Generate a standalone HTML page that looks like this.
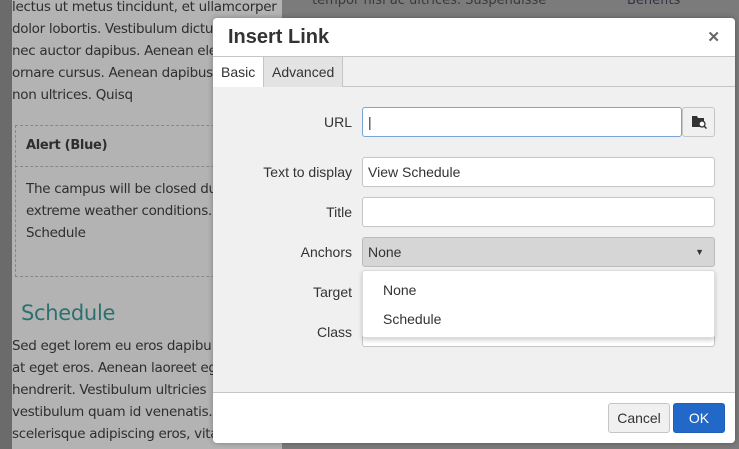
<!DOCTYPE html><html><head><style>
*{box-sizing:border-box;margin:0;padding:0}
body{width:739px;height:449px;overflow:hidden;position:relative;background:#777;font-family:"Liberation Sans",sans-serif}
.l{position:absolute;left:0;top:0;width:12px;height:449px;background:#6b6b6b}
.c{position:absolute;left:12px;top:0;width:270px;height:449px;background:#b3b3b3;color:#2e2e2e;font-family:"DejaVu Sans",sans-serif;font-size:13.5px;letter-spacing:-0.3px}
.p{position:absolute;left:0;white-space:nowrap;line-height:22px}
.r{position:absolute;left:282px;top:0;width:457px;height:449px;background:#7b7b7b;color:#3a3a3a;font-family:"DejaVu Sans",sans-serif;font-size:13px}
.dlg{position:absolute;left:213px;top:18px;width:522px;height:425px;background:#f0f0f0;border-radius:4px;overflow:hidden;box-shadow:0 0 6px rgba(0,0,0,.3)}
.hd{height:39px;background:#fff;border-bottom:1px solid #c5c5c5;position:relative}
.hd b{position:absolute;left:15px;top:8px;font-size:20px;color:#333}
.x{position:absolute;right:15px;top:10px;font-size:15px;color:#666;font-weight:bold}
.tabs{height:30px;border-bottom:1px solid #c5c5c5;position:relative}
.tab{position:absolute;top:0;height:30px;line-height:30px;font-size:14px;color:#333;padding:0 8px}
.lab{position:absolute;right:383px;font-size:14px;color:#333;text-align:right}
.in{position:absolute;left:149px;width:353px;height:30px;background:#fff;border:1px solid #c5c5c5;border-radius:3px;font-size:14px;color:#333;line-height:28px;padding-left:5px}
.ft{position:absolute;left:0;top:374px;width:522px;height:51px;background:#fff;border-top:1px solid #c5c5c5}
.btn{position:absolute;top:10px;height:30px;border-radius:3px;font-size:14px;line-height:28px;text-align:center}
</style></head><body>
<div class="l"></div>
<div class="c">
<div class="p" style="top:-4px">lectus ut metus tincidunt, et ullamcorper</div>
<div class="p" style="top:18px">dolor lobortis. Vestibulum dictu</div>
<div class="p" style="top:40px">nec auctor dapibus. Aenean ele</div>
<div class="p" style="top:62px">ornare cursus. Aenean dapibus</div>
<div class="p" style="top:84px">non ultrices. Quisq</div>
<div style="position:absolute;left:3px;top:125px;width:270px;height:152px;border:1px dashed #888"></div>
<div style="position:absolute;left:3px;top:166px;width:270px;border-top:1px dashed #888"></div>
<div class="p" style="top:135px;left:14px;font-weight:bold;font-size:13px">Alert (Blue)</div>
<div class="p" style="top:178px;left:14px">The campus will be closed du</div>
<div class="p" style="top:200px;left:14px">extreme weather conditions.</div>
<div class="p" style="top:222px;left:14px">Schedule</div>
<div class="p" style="top:298px;left:9px;font-size:21px;color:#2a716f;line-height:30px">Schedule</div>
<div class="p" style="top:335px">Sed eget lorem eu eros dapibu</div>
<div class="p" style="top:357px">at eget eros. Aenean laoreet eg</div>
<div class="p" style="top:379px">hendrerit. Vestibulum ultricies</div>
<div class="p" style="top:401px">vestibulum quam id venenatis.</div>
<div class="p" style="top:423px">scelerisque adipiscing eros, vita</div>
</div>
<div class="r"><div class="p" style="left:30px;top:-10px">tempor nisi ac ultrices. Suspendisse</div><div class="p" style="left:345px;top:-10px;color:#334">Benefits</div></div>
<div class="dlg">
<div class="hd"><b>Insert Link</b><span class="x">✕</span></div>
<div class="tabs"><div class="tab" style="left:0;background:#fff;width:50px">Basic</div><div class="tab" style="left:50px;width:80px;background:#e3e3e3;border-left:1px solid #c5c5c5;border-right:1px solid #c5c5c5">Advanced</div></div>
<div class="lab" style="top:96px">URL</div>
<div class="in" style="top:89px;width:320px;border-color:#7ba4d6">|</div>
<div style="position:absolute;left:469px;top:89px;width:33px;height:30px;border:1px solid #c5c5c5;border-radius:3px;background:#f0f0f0">
<svg width="16" height="14" viewBox="0 0 16 14" style="position:absolute;left:8px;top:7px"><path d="M1 1h5l1 2h6v9H1z" fill="#333"/><circle cx="11" cy="9" r="3" fill="#fff" stroke="#333" stroke-width="1.3"/><path d="M13 11l2.5 2.5" stroke="#333" stroke-width="1.5"/></svg></div>
<div class="lab" style="top:146px">Text to display</div>
<div class="in" style="top:139px">View Schedule</div>
<div class="lab" style="top:186px">Title</div>
<div class="in" style="top:179px"></div>
<div class="lab" style="top:226px">Anchors</div>
<div class="in" style="top:219px;background:#d6d6d6;border-color:#bbb">None<span style="position:absolute;right:10px;top:0;font-size:9px">▼</span></div>
<div class="lab" style="top:266px">Target</div>
<div class="lab" style="top:306px">Class</div>
<div class="in" style="top:299px;height:30px"></div>
<div style="position:absolute;left:149px;top:252px;width:353px;height:68px;background:#fff;border:1px solid #ddd;border-radius:3px;box-shadow:0 2px 5px rgba(0,0,0,.2);font-size:14px;color:#333">
<div style="position:absolute;left:20px;top:11px">None</div><div style="position:absolute;left:20px;top:40px">Schedule</div></div>
<div class="ft">
<div class="btn" style="left:395px;width:62px;background:#f0f0f0;border:1px solid #c5c5c5;color:#333">Cancel</div>
<div class="btn" style="left:460px;width:52px;background:#2268c9;border:1px solid #1f5fb8;color:#fff">OK</div>
</div>
</div>
</body></html>
